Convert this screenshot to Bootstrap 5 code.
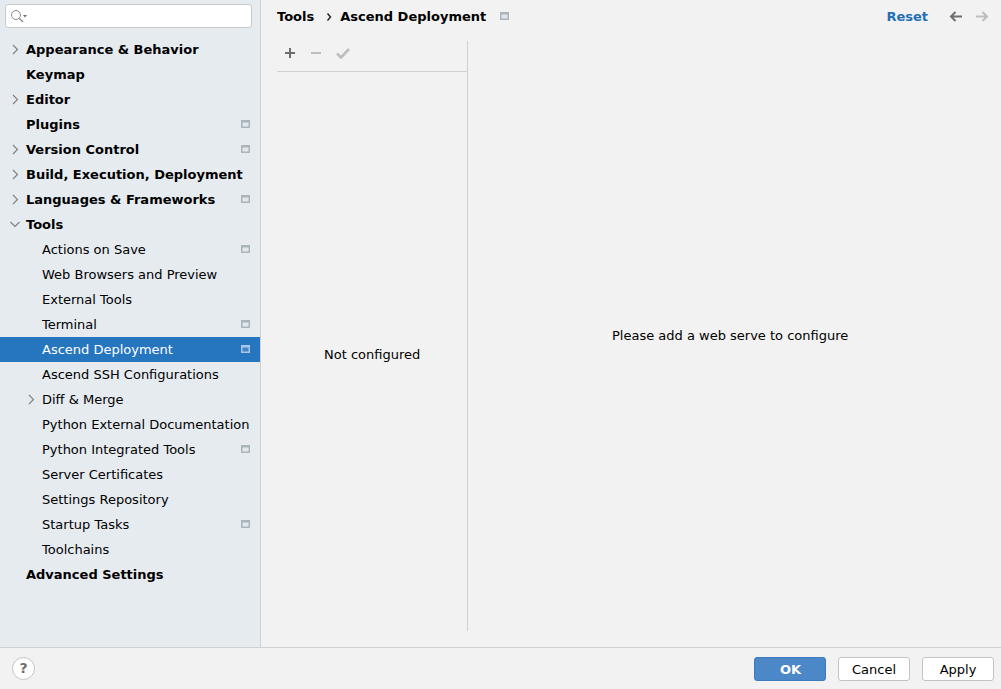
<!DOCTYPE html>
<html lang="en">
<head>
<meta charset="utf-8">
<title>Settings</title>
<link rel="stylesheet" href="https://cdn.jsdelivr.net/npm/bootstrap@5.3.0/dist/css/bootstrap.min.css">
<style>
html,body{height:100%;}
body{width:1001px;height:689px;overflow:hidden;background:#f2f2f2;font-family:"DejaVu Sans",sans-serif;font-size:13px;color:#000;}
.shell{height:689px;}
.mainrow{height:647px;}
.sidebar{width:261px;background:#e6ebf0;border-right:1px solid #d1d1d1;flex:none;}
.searchwrap{padding:4px 8px 0 5px;height:37px;}
.searchbox{height:24px;background:#fff;border:1px solid #c9c9c9;border-radius:3px;padding-left:5px;}
.treerow{height:25px;position:relative;white-space:nowrap;}
.treerow .lbl{position:absolute;left:26px;top:4px;line-height:18px;}
.treerow.sub .lbl{left:42px;}
.treerow.top .lbl{font-weight:700;}
.treerow svg.chev{position:absolute;left:10px;top:7px;}
.treerow.sub svg.chev{left:26px;}
.treerow svg.pin{position:absolute;left:241px;top:8px;}
.treerow.sel{background:#2675bf;color:#fff;}
.content{min-width:0;}
.crumbs{height:41px;padding:8px 0 0 16px;}
.crumbs .hd{font-weight:700;line-height:18px;}
.sep{margin:0 8px 0 12px;line-height:18px;}
.crumbpin{margin:4px 0 0 14px;}
.resetlink{font-weight:700;color:#2470b3;line-height:18px;margin-right:21px;}
.backarrow{margin:3px 14px 0 0;}
.fwdarrow{margin:3px 12px 0 0;}
.panes{height:590px;margin-left:16px;}
.leftpane{width:191px;border-right:1px solid #d1d1d1;}
.tools{height:31px;border-bottom:1px solid #d1d1d1;padding:0 0 6px 8px;gap:16px;}
.tools .okmark{margin-left:-1px;}
.notcfg{padding-top:274px;padding-left:47px;line-height:18px;}
.rightpane{min-width:0;padding-top:286px;padding-left:144px;line-height:18px;}
.foot{height:42px;border-top:1px solid #d1d1d1;padding:0 7px 0 12px;}
.helpbtn{width:23px;height:23px;border-radius:50%;border:1px solid #c4c4c4;background:#fff;color:#6e6e6e;font-weight:700;font-size:14px;line-height:21px;text-align:center;}
.dlgbtn{width:72px;height:24px;border-radius:3px;border:1px solid #c4c4c4;background:#fff;color:#000;font-size:13px;line-height:22px;padding:1px 0 0;text-align:center;}
.dlgbtn.prim{background:#4c87c8;border-color:#3d79bd;color:#fff;font-weight:700;padding-left:1px;}
.btnset{gap:12px;}
</style>
</head>
<body>
<div class="shell d-flex flex-column">
 <div class="mainrow d-flex">
  <div class="sidebar">
   <div class="searchwrap">
    <div class="searchbox d-flex align-items-center">
     <svg width="16" height="14" viewBox="0 0 16 14" fill="none"><circle cx="5" cy="6" r="4.500" stroke="#8c8c8c" stroke-width="1"/><path d="M8.500 9.500l3.500 3.500" stroke="#8c8c8c" stroke-width="1.400"/><path d="M12 6h4l-2 2.500z" fill="#6e6e6e"/></svg>
    </div>
   </div>
   <div id="tree"></div>
  </div>
  <div class="content flex-grow-1 d-flex flex-column">
   <div class="crumbs d-flex align-items-start">
    <span class="hd">Tools</span>
    <span class="sep d-flex align-items-center"><svg width="6" height="18" viewBox="0 0 6 18" fill="none"><path d="M1.500 5.500l3 3.500-3 3.500" stroke="#222" stroke-width="1.400"/></svg></span>
    <span class="hd">Ascend Deployment</span>
    <svg class="crumbpin" width="9" height="8" viewBox="0 0 9 8"><rect width="9" height="8" fill="#aab4bd"/><rect x="1.500" y="2.500" width="6" height="4" fill="#e2e5e8"/></svg>
    <span class="resetlink ms-auto">Reset</span>
    <svg class="backarrow" width="13" height="11" viewBox="0 0 13 11" fill="none"><path d="M13 5.500H2M6.500 1L2 5.500 6.500 10" stroke="#6e6e6e" stroke-width="2"/></svg>
    <svg class="fwdarrow" width="13" height="11" viewBox="0 0 13 11" fill="none"><path d="M0 5.500h11M6.500 1L11 5.500 6.500 10" stroke="#bdbdbd" stroke-width="2"/></svg>
   </div>
   <div class="panes d-flex">
    <div class="leftpane flex-none">
     <div class="tools d-flex align-items-center">
      <svg width="10" height="10" viewBox="0 0 10 10"><path d="M5 0v10M0 5h10" stroke="#6e6e6e" stroke-width="2"/></svg>
      <svg width="10" height="10" viewBox="0 0 10 10"><path d="M0 5h10" stroke="#bdbdbd" stroke-width="2"/></svg>
      <svg class="okmark" width="14" height="11" viewBox="0 0 14 11" fill="none"><path d="M1 5.500l4 4L13 1" stroke="#bdbdbd" stroke-width="2.600"/></svg>
     </div>
     <div class="notcfg">Not configured</div>
    </div>
    <div class="rightpane flex-grow-1">Please add a web serve to configure</div>
   </div>
  </div>
 </div>
 <div class="foot d-flex align-items-center justify-content-between">
  <div class="helpbtn">?</div>
  <div class="btnset d-flex">
   <button class="dlgbtn prim" type="button">OK</button>
   <button class="dlgbtn" type="button">Cancel</button>
   <button class="dlgbtn" type="button">Apply</button>
  </div>
 </div>
</div>
<script>
var items=[
["Appearance & Behavior",1,">",0],["Keymap",1,"",0],["Editor",1,">",0],["Plugins",1,"",1],["Version Control",1,">",1],
["Build, Execution, Deployment",1,">",0],["Languages & Frameworks",1,">",1],["Tools",1,"v",0],
["Actions on Save",0,"",1],["Web Browsers and Preview",0,"",0],["External Tools",0,"",0],["Terminal",0,"",1],
["Ascend Deployment",0,"",1,1],["Ascend SSH Configurations",0,"",0],["Diff & Merge",0,">",0],["Python External Documentation",0,"",0],
["Python Integrated Tools",0,"",1],["Server Certificates",0,"",0],["Settings Repository",0,"",0],["Startup Tasks",0,"",1],["Toolchains",0,"",0],["Advanced Settings",1,"",0]];
var t=document.getElementById('tree');
items.forEach(function(i){
 var d=document.createElement('div');
 d.className='treerow '+(i[1]?'top':'sub')+(i[4]?' sel':'');
 var h='';
 if(i[2]==='>')h+='<svg class="chev" width="10" height="11" viewBox="0 0 10 11" fill="none"><path d="M3 1l4.500 4.500L3 10" stroke="#7f7f7f" stroke-width="1.100"/></svg>';
 if(i[2]==='v')h+='<svg class="chev" width="10" height="11" viewBox="0 0 10 11" fill="none"><path d="M.5 3l4.500 4.500L9.500 3" stroke="#7f7f7f" stroke-width="1.100"/></svg>';
 var s=document.createElement('span');s.className='lbl';s.textContent=i[0];
 d.innerHTML=h;d.appendChild(s);
 if(i[3]){var c=i[4]?'#a9c6e6':'#aab4bd';var f=i[4]?'#3f86cb':'#e2e7ec';d.insertAdjacentHTML('beforeend','<svg class="pin" width="9" height="8" viewBox="0 0 9 8"><rect width="9" height="8" fill="'+c+'"/><rect x="1.500" y="2.500" width="6" height="4" fill="'+f+'"/></svg>');}
 t.appendChild(d);
});
</script>
<script src="https://cdn.jsdelivr.net/npm/bootstrap@5.3.0/dist/js/bootstrap.bundle.min.js"></script>
</body>
</html>
